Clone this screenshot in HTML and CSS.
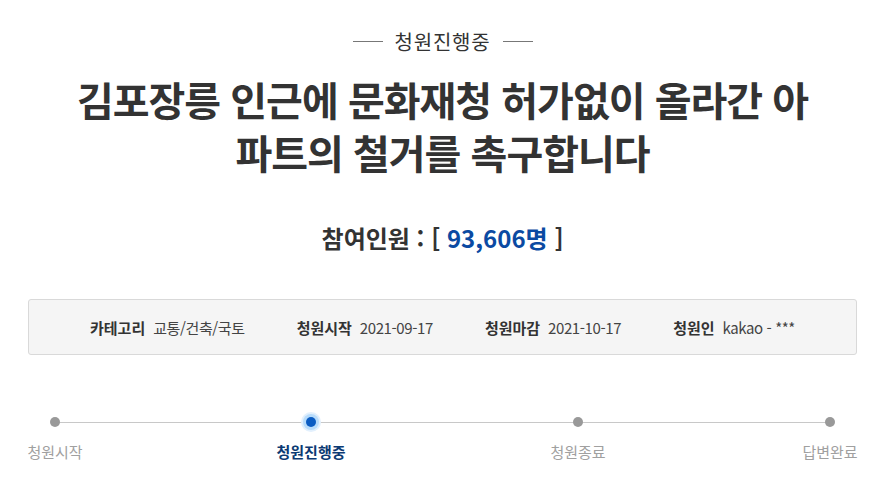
FILE: index.html
```html
<!DOCTYPE html>
<html lang="ko">
<head>
<meta charset="utf-8">
<link rel="stylesheet" href="styles.css">
</head>
<body>
<div class="page">
  <div class="status"><span class="dash"></span><span class="status-text">청원진행중</span><span class="dash"></span></div>
  <h1 class="title">김포장릉 인근에 문화재청 허가없이 올라간 아파트의 철거를 촉구합니다</h1>
  <p class="count">참여인원 : [ <span class="num">93,606명</span> ]</p>
  <ul class="info">
    <li><strong>카테고리</strong><span>교통/건축/국토</span></li>
    <li><strong>청원시작</strong><span>2021-09-17</span></li>
    <li><strong>청원마감</strong><span>2021-10-17</span></li>
    <li><strong>청원인</strong><span>kakao - ***</span></li>
  </ul>
  <div class="progress">
    <div class="track"></div>
    <div class="step"><span class="dot"></span><span class="label">청원시작</span></div>
    <div class="gap"></div>
    <div class="step active"><span class="dot"></span><span class="label">청원진행중</span></div>
    <div class="gap"></div>
    <div class="step"><span class="dot"></span><span class="label">청원종료</span></div>
    <div class="gap"></div>
    <div class="step"><span class="dot"></span><span class="label">답변완료</span></div>
  </div>
</div>
</body>
</html>
```
FILE: styles.css
```css
* { box-sizing: border-box; }
html, body { margin: 0; padding: 0; background: #fff; }
body {
  font-family: "Noto Sans CJK KR", "Noto Sans", sans-serif;
  color: #333;
}
.page {
  width: 829px;
  margin: 0 0 0 28px;
  padding-top: 27px;
}
.status {
  display: flex;
  justify-content: center;
  align-items: center;
  gap: 12px;
  height: 28px;
  font-size: 20px;
  letter-spacing: 0.8px;
  color: #333;
}
.dash {
  display: block;
  width: 30px;
  height: 1px;
  background: #777;
}
.title {
  margin: 18px auto 0;
  width: 750px;
  text-align: center;
  font-size: 40px;
  line-height: 53px;
  font-weight: 700;
  letter-spacing: -1px;
  color: #333;
}
.count {
  margin: 42px 0 0;
  text-align: center;
  font-size: 24px;
  line-height: 34px;
  font-weight: 700;
  color: #333;
}
.count .num { color: #0b4aa2; }
.info {
  list-style: none;
  margin: 44px 0 0;
  padding: 0;
  height: 56px;
  border: 1px solid #d9d9d9;
  border-radius: 3px;
  background: #f5f5f5;
  display: flex;
  justify-content: center;
  align-items: center;
  gap: 52px;
  font-size: 15px;
}
.info li { display: flex; gap: 8px; align-items: center; }
.info strong { font-weight: 700; color: #333; }
.info span { color: #444; letter-spacing: -0.4px; }
.progress {
  position: relative;
  margin-top: 58px;
  display: grid;
  grid-template-columns: 54px 195fr 68px 206fr 54px 198fr 54px;
}
.track {
  position: absolute;
  left: 27px;
  right: 27px;
  top: 9px;
  height: 1px;
  background: #c8c8c8;
}
.step {
  position: relative;
  display: flex;
  flex-direction: column;
  align-items: center;
}
.dot {
  width: 10px;
  height: 10px;
  margin-top: 4px;
  border-radius: 50%;
  background: #999;
}
.step.active .dot {
  background: #0b5cc2;
  box-shadow: 0 0 0 3px #b8dcfb, 0 0 0 5px #e2f0fd;
}
.label {
  margin-top: 14px;
  white-space: nowrap;
  font-size: 15px;
  line-height: 22px;
  color: #a0a0a0;
}
.step.active .label { color: #0c3a73; font-weight: 700; }
```
